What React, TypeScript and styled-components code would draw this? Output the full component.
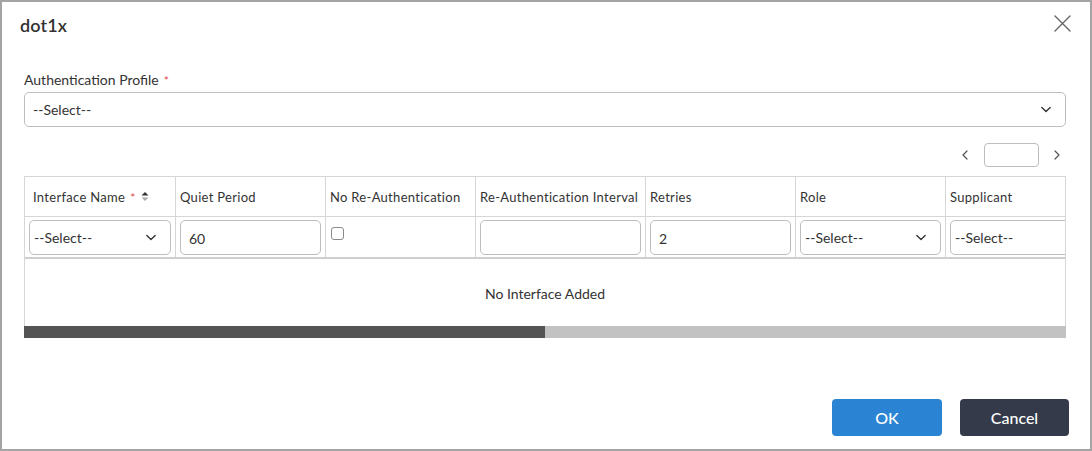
import styled, { createGlobalStyle } from "styled-components";

const GlobalStyle = createGlobalStyle`
  html, body {
    margin: 0;
    padding: 0;
    background: #ffffff;
  }
  body {
    font-family: Lato, "Open Sans", "Liberation Sans", sans-serif;
    color: #333333;
  }
  * {
    box-sizing: border-box;
  }
`;

const Dialog = styled.div`
  width: 1092px;
  height: 451px;
  border: 2px solid #a4a4a4;
  background: #ffffff;
  display: flex;
  flex-direction: column;
`;

const Header = styled.div`
  height: 46px;
  display: flex;
  align-items: center;
  justify-content: space-between;
  padding: 0 19px 0 18px;
`;

const Title = styled.div`
  font-size: 18px;
  font-weight: 600;
  color: #333333;
  letter-spacing: 0.1px;
`;

const CloseButton = styled.button`
  width: 18px;
  height: 18px;
  padding: 0;
  border: none;
  background: none;
  display: flex;
  align-items: center;
  justify-content: center;
  margin-top: -4px;
  cursor: pointer;
`;

const Body = styled.div`
  flex: 1;
  padding: 23px 24px 0 22px;
  display: flex;
  flex-direction: column;
`;

const FieldLabel = styled.div`
  font-size: 14px;
  line-height: 18px;
  color: #333333;
  margin-bottom: 3px;
  display: flex;
  align-items: center;
  gap: 5px;
`;

const Required = styled.span`
  color: #e2474f;
  font-size: 12px;
  line-height: 12px;
  padding-top: 2px;
`;

const SelectBox = styled.div<{ $compact?: boolean }>`
  width: 100%;
  height: 35px;
  border: 1px solid #bdbdbd;
  border-radius: 5px;
  display: flex;
  align-items: center;
  justify-content: space-between;
  padding: 0 14px 0 ${(p) => (p.$compact ? 4 : 8)}px;
  font-size: 14px;
  color: #333333;
  background: #ffffff;
`;

const Pager = styled.div`
  margin-top: 16px;
  height: 24px;
  display: flex;
  justify-content: flex-end;
  align-items: center;
  padding-right: 5px;
`;

const PagerArrow = styled.span`
  display: flex;
  align-items: center;
  justify-content: center;
  width: 8px;
`;

const PagerBox = styled.div`
  width: 55px;
  height: 24px;
  border: 1px solid #bdbdbd;
  border-radius: 4px;
  margin: 0 14px 0 15px;
`;

const TableFrame = styled.div`
  margin-top: 9px;
  width: 1042px;
  display: flex;
  flex-direction: column;
`;

const TableViewport = styled.div`
  width: 100%;
  overflow: hidden;
  border: 1px solid #d6d6d6;
  border-bottom: none;
`;

const TableInner = styled.div`
  width: 2082px;
`;

const COLS = "151px 150px 150px 170px 150px 150px 150px 961px";

const HeadRow = styled.div`
  display: grid;
  grid-template-columns: ${COLS};
  height: 40px;
  border-bottom: 1px solid #d6d6d6;
`;

const HeadCell = styled.div<{ $first?: boolean }>`
  border-right: 1px solid #d6d6d6;
  display: flex;
  align-items: center;
  padding: 0 0 0 ${(p) => (p.$first ? 8 : 4)}px;
  font-size: 13px;
  color: #333333;
  white-space: nowrap;
  gap: 5px;
  letter-spacing: 0.3px;
`;

const FilterRow = styled.div`
  display: grid;
  grid-template-columns: ${COLS};
  height: 42px;
  border-bottom: 2px solid #cfcfcf;
`;

const FilterCell = styled.div`
  border-right: 1px solid #d6d6d6;
  padding: 3px 4px 0 4px;
`;

const TextInput = styled.div`
  width: 100%;
  height: 35px;
  border: 1px solid #bdbdbd;
  border-radius: 5px;
  display: flex;
  align-items: center;
  padding: 2px 0 0 8px;
  font-size: 14px;
  color: #333333;
`;

const CheckBox = styled.span`
  display: block;
  width: 13px;
  height: 13px;
  margin: 7px 0 0 1px;
  border: 1px solid #8a8a8a;
  border-radius: 3px;
  background: #ffffff;
`;

const EmptyRow = styled.div`
  width: 1040px;
  height: 67px;
  display: flex;
  align-items: center;
  justify-content: center;
  font-size: 14px;
  color: #333333;
  padding-top: 2px;
`;

const ScrollTrack = styled.div`
  height: 12px;
  width: 100%;
  background: #c2c2c2;
  display: flex;
`;

const ScrollThumb = styled.div`
  height: 100%;
  background: #545454;
`;

const Footer = styled.div`
  display: flex;
  justify-content: flex-end;
  gap: 18px;
  padding: 0 21px 13px 0;
`;

const Button = styled.button<{ $variant: "primary" | "dark" }>`
  width: ${(p) => (p.$variant === "primary" ? 110 : 109)}px;
  height: 37px;
  border: none;
  border-radius: 4px;
  background: ${(p) => (p.$variant === "primary" ? "#2b84d3" : "#343a4a")};
  color: #ffffff;
  font-family: Lato, "Open Sans", "Liberation Sans", sans-serif;
  font-size: 16px;
  font-weight: 500;
  cursor: pointer;
`;

const Chevron = ({ dir, color = "#333", w = 10 }: { dir: "down" | "left" | "right"; color?: string; w?: number }) => {
  if (dir === "down") {
    return (
      <svg width={w} height={w / 2 + 2} viewBox="0 0 12 7" fill="none">
        <path d="M1 1l5 5 5-5" stroke={color} strokeWidth="1.6" strokeLinecap="round" strokeLinejoin="round" />
      </svg>
    );
  }
  return (
    <svg width="6" height="10" viewBox="0 0 6 10" fill="none">
      <path
        d={dir === "left" ? "M5 1L1 5l4 4" : "M1 1l4 4-4 4"}
        stroke={color}
        strokeWidth="1.2"
        strokeLinecap="round"
        strokeLinejoin="round"
      />
    </svg>
  );
};

const SortIcon = () => (
  <svg width="8" height="11" viewBox="0 0 8 11">
    <path d="M4 1L7.5 4.5H0.5z" fill="#333" />
    <path d="M4 10L7.5 6.5H0.5z" fill="#aaa" />
  </svg>
);

const columns = [
  "Interface Name",
  "Quiet Period",
  "No Re-Authentication",
  "Re-Authentication Interval",
  "Retries",
  "Role",
  "Supplicant",
];

const VIEW_WIDTH = 1042;
const CONTENT_WIDTH = 2084;

const App = () => {
  const thumbWidth = Math.round((VIEW_WIDTH / CONTENT_WIDTH) * VIEW_WIDTH);
  return (
    <>
      <GlobalStyle />
      <Dialog>
        <Header>
          <Title>dot1x</Title>
          <CloseButton aria-label="close">
            <svg width="17" height="17" viewBox="0 0 17 17">
              <path d="M1 1l15 15M16 1L1 16" stroke="#666" strokeWidth="1.4" strokeLinecap="round" />
            </svg>
          </CloseButton>
        </Header>
        <Body>
          <FieldLabel>
            Authentication Profile <Required>*</Required>
          </FieldLabel>
          <SelectBox>
            <span>--Select--</span>
            <Chevron dir="down" />
          </SelectBox>
          <Pager>
            <PagerArrow>
              <Chevron dir="left" color="#555" />
            </PagerArrow>
            <PagerBox />
            <PagerArrow>
              <Chevron dir="right" color="#555" />
            </PagerArrow>
          </Pager>
          <TableFrame>
            <TableViewport>
              <TableInner>
                <HeadRow>
                  {columns.map((c, i) => (
                    <HeadCell key={c} $first={i === 0}>
                      {c}
                      {i === 0 && (
                        <>
                          <Required>*</Required>
                          <SortIcon />
                        </>
                      )}
                    </HeadCell>
                  ))}
                  <HeadCell />
                </HeadRow>
                <FilterRow>
                  <FilterCell>
                    <SelectBox $compact>
                      <span>--Select--</span>
                      <Chevron dir="down" />
                    </SelectBox>
                  </FilterCell>
                  <FilterCell>
                    <TextInput>60</TextInput>
                  </FilterCell>
                  <FilterCell>
                    <CheckBox />
                  </FilterCell>
                  <FilterCell>
                    <TextInput />
                  </FilterCell>
                  <FilterCell>
                    <TextInput>2</TextInput>
                  </FilterCell>
                  <FilterCell>
                    <SelectBox $compact>
                      <span>--Select--</span>
                      <Chevron dir="down" />
                    </SelectBox>
                  </FilterCell>
                  <FilterCell>
                    <SelectBox $compact>
                      <span>--Select--</span>
                      <Chevron dir="down" />
                    </SelectBox>
                  </FilterCell>
                  <FilterCell />
                </FilterRow>
                <EmptyRow>No Interface Added</EmptyRow>
              </TableInner>
            </TableViewport>
            <ScrollTrack>
              <ScrollThumb style={{ width: thumbWidth }} />
            </ScrollTrack>
          </TableFrame>
        </Body>
        <Footer>
          <Button $variant="primary">OK</Button>
          <Button $variant="dark">Cancel</Button>
        </Footer>
      </Dialog>
    </>
  );
};

export default App;
